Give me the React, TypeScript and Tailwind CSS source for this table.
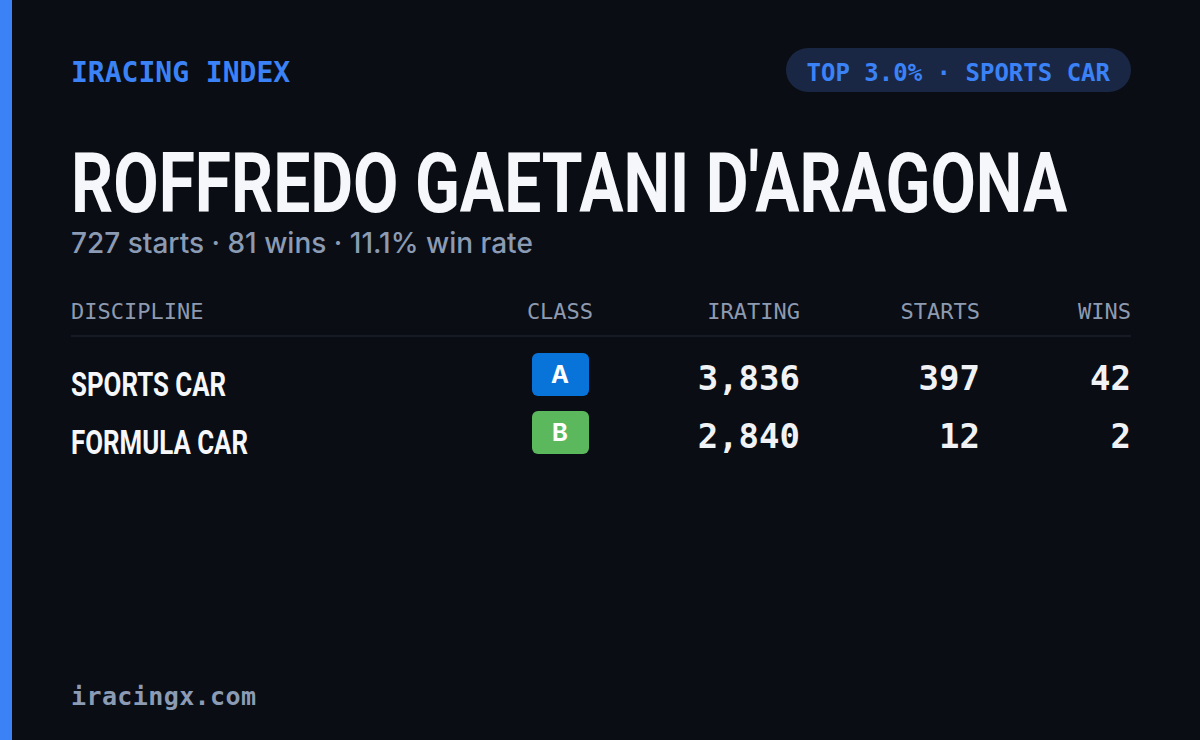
import React from 'react';

const mono = "font-['DejaVu_Sans_Mono','Liberation_Mono',monospace]";
const display = "font-['Roboto','Liberation_Sans',sans-serif]";

type Row = {
  discipline: string;
  cls: 'A' | 'B';
  irating: string;
  starts: string;
  wins: string;
};

const rows: Row[] = [
  { discipline: 'SPORTS CAR', cls: 'A', irating: '3,836', starts: '397', wins: '42' },
  { discipline: 'FORMULA CAR', cls: 'B', irating: '2,840', starts: '12', wins: '2' },
];

const classColors = {
  A: 'bg-[#0873d9]',
  B: 'bg-[#5cb85c]',
};

const cols = 'grid grid-cols-[429px_120px_180px_180px_151px]';

export default function App() {
  return (
    <div className="flex h-[740px] w-[1200px] overflow-hidden bg-[#0a0d14]">
      {/* Barra lateral */}
      <div className="w-[12px] shrink-0 bg-[#3b82f6]" />

      <div className="flex min-w-0 flex-1 flex-col pl-[59px] pr-[69px] pt-[48px] pb-[29px]">
        {/* Cabecera */}
        <div className="flex items-start justify-between">
          <span className={`${mono} mt-[11px] text-[28px] font-bold leading-none text-[#3b82f6]`}>
            IRACING INDEX
          </span>
          <div className="flex h-[44px] items-center rounded-full bg-[#1a2744] px-[21px]">
            <span className={`${mono} mt-[6px] whitespace-nowrap text-[24px] font-bold leading-none text-[#3b82f6]`}>
              TOP 3.0% · SPORTS CAR
            </span>
          </div>
        </div>

        {/* Nombre */}
        <div className="mt-[56px] w-full">
          <h1
            className={`${display} inline-block origin-left scale-x-[0.794] whitespace-nowrap text-[83px] font-bold leading-[72px] text-[#f5f7fb]`}
          >
            ROFFREDO GAETANI D'ARAGONA
          </h1>
        </div>
        <p className="mt-[9px] font-['Inter',sans-serif] text-[28px] font-medium leading-none text-[#8b9bb4]">
          727 starts · 81 wins · 11.1% win rate
        </p>

        {/* Tabla */}
        <div className={`${cols} mt-[44px] border-b-2 border-[#161a24] pb-[12px] ${mono} text-[22px] leading-none text-[#8d9ab0]`}>
          <span>DISCIPLINE</span>
          <span className="text-center">CLASS</span>
          <span className="text-right">IRATING</span>
          <span className="text-right">STARTS</span>
          <span className="text-right">WINS</span>
        </div>

        <div className="pt-[16px]">
          {rows.map((r) => (
            <div key={r.discipline} className={`${cols} h-[58px] items-start`}>
              <div className="mt-[14px]">
                <span
                  className={`${display} inline-block origin-left scale-x-[0.76] whitespace-nowrap text-[34px] font-bold leading-none text-[#f5f7fb]`}
                >
                  {r.discipline}
                </span>
              </div>
              <div className="flex justify-center">
                <div
                  className={`flex h-[43px] w-[57px] items-center justify-center rounded-[6px] ${classColors[r.cls]} font-['Inter',sans-serif] text-[24px] font-bold leading-none text-white`}
                >
                  {r.cls}
                </div>
              </div>
              <span className={`${mono} mt-[8px] text-right text-[34px] font-bold leading-none text-[#f0f2f5]`}>
                {r.irating}
              </span>
              <span className={`${mono} mt-[8px] text-right text-[34px] font-bold leading-none text-[#f0f2f5]`}>
                {r.starts}
              </span>
              <span className={`${mono} mt-[8px] text-right text-[34px] font-bold leading-none text-[#f0f2f5]`}>
                {r.wins}
              </span>
            </div>
          ))}
        </div>

        {/* Pie */}
        <div className="mt-auto">
          <span className={`${mono} text-[25px] font-bold leading-none tracking-[0.4px] text-[#8b9bb4]`}>
            iracingx.com
          </span>
        </div>
      </div>
    </div>
  );
}
